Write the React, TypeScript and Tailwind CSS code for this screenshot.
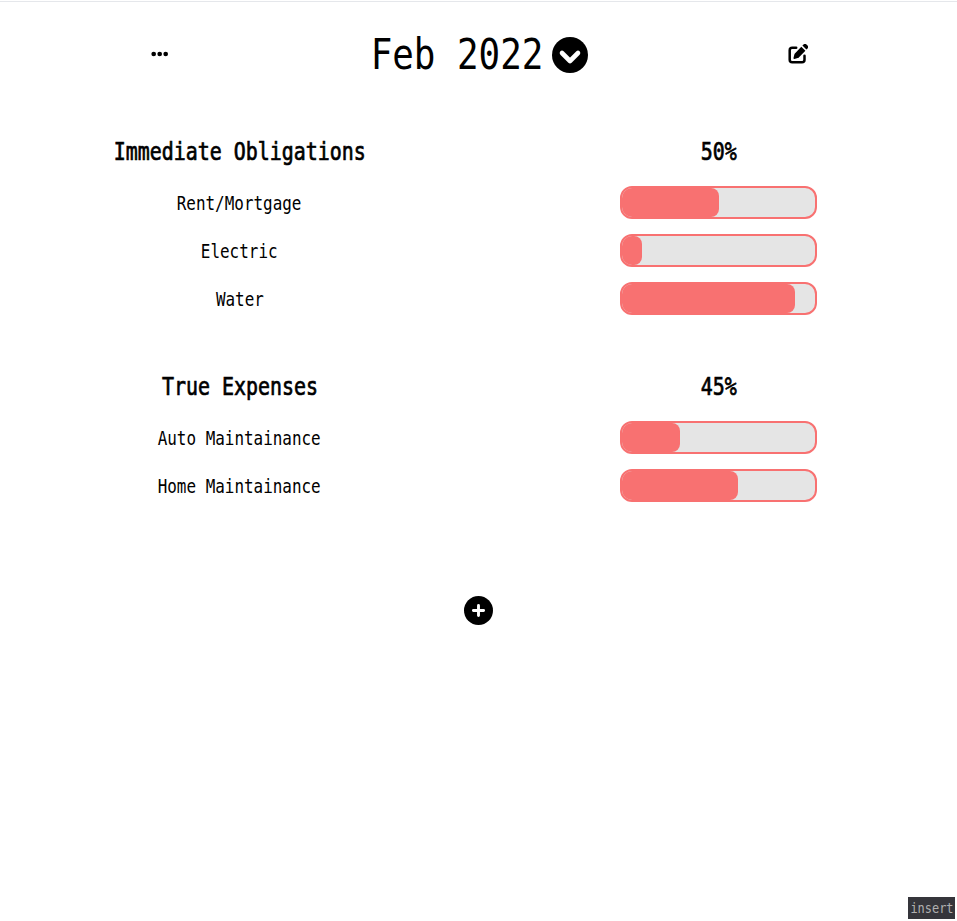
import React from "react";

type Item = { name: string; percent: number };
type Group = { title: string; total: string; items: Item[] };

const groups: Group[] = [
  {
    title: "Immediate Obligations",
    total: "50%",
    items: [
      { name: "Rent/Mortgage", percent: 50.3 },
      { name: "Electric", percent: 10.4 },
      { name: "Water", percent: 89.7 },
    ],
  },
  {
    title: "True Expenses",
    total: "45%",
    items: [
      { name: "Auto Maintainance", percent: 30 },
      { name: "Home Maintainance", percent: 60 },
    ],
  },
];

function DotsIcon() {
  return (
    <svg viewBox="0 0 18 6" className="h-1.5 w-[18px]" fill="currentColor">
      <circle cx="2.7" cy="3" r="2.35" />
      <circle cx="8.7" cy="3" r="2.35" />
      <circle cx="14.7" cy="3" r="2.35" />
    </svg>
  );
}

function ChevronCircleIcon() {
  return (
    <svg viewBox="0 0 36 36" className="size-9" fill="none">
      <circle cx="18" cy="18" r="18" fill="currentColor" />
      <path d="M10 16l8 8 8-8" stroke="white" strokeWidth="4.6" strokeLinecap="round" strokeLinejoin="round" />
    </svg>
  );
}

function EditIcon() {
  return (
    <svg viewBox="0 0 20 20" className="size-5" fill="none">
      <path d="M8.2 3.7H4.2A2.5 2.5 0 0 0 1.7 6.2v9.6a2.5 2.5 0 0 0 2.5 2.5h9.8a2.5 2.5 0 0 0 2.5-2.5v-4" stroke="currentColor" strokeWidth="2.5" strokeLinecap="round" />
      <path d="M13.3 2.7l4.1 4.1-6.6 6.6c-.3.3-.7.5-1.1.6l-3.3.9c-.6.1-1-.3-.9-.9l.8-3.3c.1-.4.3-.8.6-1.1zM14.4 1.6l.9-.9a2.4 2.4 0 0 1 3.4 0l.6.6a2.4 2.4 0 0 1 0 3.4l-.9.9z" fill="currentColor" />
    </svg>
  );
}

function PlusCircleIcon() {
  return (
    <svg viewBox="0 0 29 29" className="size-[29px]" fill="none">
      <circle cx="14.5" cy="14.5" r="14.5" fill="currentColor" />
      <path d="M14.5 9.4v10.2M9.4 14.5h10.2" stroke="white" strokeWidth="2.9" strokeLinecap="round" />
    </svg>
  );
}

function Narrow({ children }: { children: React.ReactNode }) {
  return <span className="inline-block scale-x-[0.83] whitespace-nowrap">{children}</span>;
}

function Bar({ percent }: { percent: number }) {
  return (
    <div className="h-[33px] w-[197px] overflow-hidden rounded-xl border-2 border-[#f87171] bg-[#e5e5e5]">
      <div className="h-full rounded-r-lg bg-[#f87171]" style={{ width: `${percent}%` }} />
    </div>
  );
}

function BudgetGroup({ group }: { group: Group }) {
  return (
    <section>
      <div className="grid h-9 grid-cols-[479px_479px] items-center text-center text-[24px] leading-9 [-webkit-text-stroke:0.7px_black]">
        <h2><Narrow>{group.title}</Narrow></h2>
        <div><Narrow>{group.total}</Narrow></div>
      </div>
      <div className="mt-4 flex flex-col gap-[15px]">
        {group.items.map((item) => (
          <div key={item.name} className="grid h-[33px] grid-cols-[479px_479px] items-center justify-items-center text-[19.2px]">
            <div className="flex h-[33px] items-center pt-0.5 leading-[31px]"><Narrow>{item.name}</Narrow></div>
            <Bar percent={item.percent} />
          </div>
        ))}
      </div>
    </section>
  );
}

export default function App() {
  return (
    <div className="flex h-[921px] flex-col overflow-hidden border-t border-white bg-white font-['DejaVu_Sans_Mono',monospace] text-black">
      <div className="h-px shrink-0 bg-[#e5e7eb]" />
      <header className="mt-5 grid h-16 shrink-0 grid-cols-3 items-center justify-items-center">
        <button aria-label="Menu"><DotsIcon /></button>
        <div className="flex items-center gap-[9px]">
          <h1 className="flex w-[173px] justify-center pl-px text-[43.2px] leading-[64px]"><Narrow>Feb 2022</Narrow></h1>
          <div className="pt-0.5"><ChevronCircleIcon /></div>
        </div>
        <button aria-label="Edit" className="pl-px"><EditIcon /></button>
      </header>
      <main className="mt-12 flex flex-col gap-[54px]">
        {groups.map((group) => <BudgetGroup key={group.title} group={group} />)}
      </main>
      <button aria-label="Add" className="mt-[94px] self-center"><PlusCircleIcon /></button>
      <footer className="mt-auto mr-0.5 mb-0.5 flex h-[22px] w-[47px] items-center justify-center self-end bg-[#35353b] text-[14.4px] leading-[22px] text-[#b0b0b0]">
        <Narrow>insert</Narrow>
      </footer>
    </div>
  );
}
